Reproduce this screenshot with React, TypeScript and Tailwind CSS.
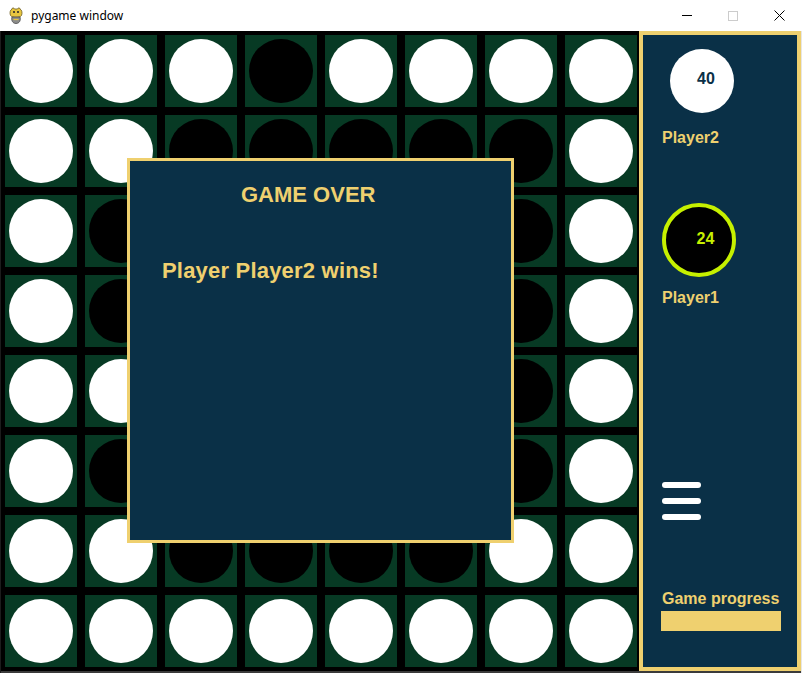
import React from 'react';

type Cell = 'W' | 'B' | null;

// board as seen in the screenshot (hidden cells under the dialog are filled in)
const rows = [
  'WWWBWWWW',
  'WWBBBBBW',
  'WBWWBWBW',
  'WBWBWWBW',
  'WWBWWBBW',
  'WBWWWWBW',
  'WWBBBBWW',
  'WWWWWWWW',
];

const board: Cell[][] = rows.map((r) => r.split('').map((c) => (c === 'W' ? 'W' : c === 'B' ? 'B' : null)));

const PygameIcon = () => (
  <svg width="14" height="18" viewBox="0 0 14 18">
    <path d="M3 2 C3 0.5 5 0.5 5.5 2 L8.5 2 C9 0.5 11 0.5 11 2 C13 3 13.5 6 12.5 8.5 C11 11 3 11 1.5 8.5 C0.5 6 1 3 3 2 Z" fill="#e8c640" stroke="#6b5a1e" strokeWidth="0.8" />
    <circle cx="5" cy="5" r="1.1" fill="#2b2b2b" />
    <circle cx="9" cy="5" r="1.1" fill="#2b2b2b" />
    <path d="M3 10 C2 13 3.5 16.5 7 16.5 C10.5 16.5 12 13 11 10 Z" fill="#8c8c8c" stroke="#4a4a4a" strokeWidth="0.8" />
    <path d="M4.5 12.5 L9.5 12.5" stroke="#e8c640" strokeWidth="1.2" />
  </svg>
);

const TitleBar = () => (
  <div className="flex h-[31px] items-center bg-white font-['Noto_Sans',sans-serif] text-[12px] text-black">
    <div className="ml-[9px] mt-[1px] flex h-[18px] w-[14px]">
      <PygameIcon />
    </div>
    <span className="ml-[8px]">pygame window</span>
    <div className="ml-auto flex h-full items-center">
      <div className="flex h-full w-[46px] items-center justify-center">
        <div className="h-px w-[10px] bg-black" />
      </div>
      <div className="flex h-full w-[46px] items-center justify-center">
        <div className="h-[10px] w-[10px] border border-[#cccccc]" />
      </div>
      <div className="flex h-full w-[46px] items-center justify-center">
        <svg width="11" height="11" viewBox="0 0 11 11">
          <path d="M0.5 0.5 L10.5 10.5 M10.5 0.5 L0.5 10.5" stroke="#000" strokeWidth="1" />
        </svg>
      </div>
    </div>
  </div>
);

const Board = () => (
  <div className="relative h-[640px] w-[638px] overflow-hidden bg-black">
    <div className="grid w-[640px] grid-cols-[repeat(8,80px)] grid-rows-[repeat(8,80px)]">
      {board.map((row, y) =>
        row.map((c, x) => (
          <div key={`${x}-${y}`} className="p-[4px]">
            <div className="flex h-[72px] w-[72px] items-center justify-center bg-[#073a24]">
              {c && (
                <div className={`h-[64px] w-[64px] rounded-full ${c === 'W' ? 'bg-white' : 'bg-black'}`} />
              )}
            </div>
          </div>
        ))
      )}
    </div>

    {/* game over dialog */}
    <div className="absolute left-[126px] top-[127px] h-[385px] w-[387px] border-[3px] border-[#efd06f] bg-[#0a3047] font-['Liberation_Sans',Arial,sans-serif] text-[22px] font-bold leading-[22px] text-[#efd06f]">
      <div className="ml-[111px] mt-[23px]">GAME OVER</div>
      <div className="ml-[32px] mt-[54px] tracking-[0.2px]">Player Player2 wins!</div>
    </div>
  </div>
);

const SidePanel = () => (
  <div className="flex h-[640px] w-[162px] flex-col border-4 border-[#efd06f] bg-[#0a3047] font-['Liberation_Sans',Arial,sans-serif] text-[16px] font-bold leading-[16px]">
    <div className="ml-[27px] mt-[14px] flex h-[64px] w-[64px] items-center justify-center rounded-full bg-white">
      <span className="ml-[8px] mt-[-5px] text-[#0a3047]">40</span>
    </div>
    <div className="ml-[19px] mt-[17px] text-[#efd06f]">Player2</div>

    <div className="ml-[19px] mt-[57px] flex h-[74px] w-[74px] items-center justify-center rounded-full border-4 border-[#c6f000] bg-black">
      <span className="ml-[13px] mt-[-2px] text-[#c6f000]">24</span>
    </div>
    <div className="ml-[19px] mt-[13px] text-[#efd06f]">Player1</div>

    <div className="ml-[19px] mt-[176px] flex w-[39px] flex-col gap-[10px]">
      <div className="h-[6px] rounded-[3px] bg-white" />
      <div className="h-[6px] rounded-[3px] bg-white" />
      <div className="h-[6px] rounded-[3px] bg-white" />
    </div>

    <div className="ml-[19px] mt-[71px] text-[#efd06f]">Game progress</div>
    <div className="ml-[18px] mt-[4px] h-[20px] w-[120px] bg-[#efd06f]" />
  </div>
);

export default function App() {
  return (
    <div className="h-[673px] w-[802px] overflow-hidden bg-[#3b3b3b]">
      <TitleBar />
      <div className="flex h-[642px] border-l border-r border-l-[#1c1c1c] border-r-[#e6e6e6] pb-[2px]">
        <Board />
        <SidePanel />
      </div>
    </div>
  );
}
